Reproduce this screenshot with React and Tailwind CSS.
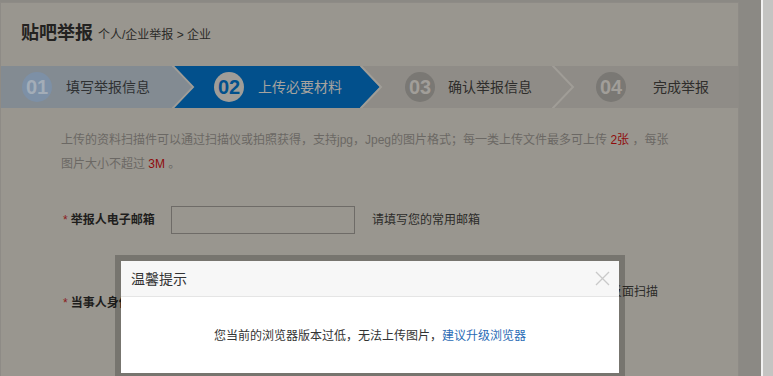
import React from 'react';

const font = "font-['Liberation_Sans','Noto_Sans_CJK_SC',sans-serif]";

const steps = [
  {
    no: '01',
    label: '填写举报信息',
    box: 'w-[172px] bg-[#838b92] pl-[21px] gap-[14px]',
    circle: 'bg-[#7d90a6] text-[#a3adb8]',
    text: 'text-[#2f3133]',
    arrowFill: '#838b92',
  },
  {
    no: '02',
    label: '上传必要材料',
    box: 'w-[188px] bg-[#02508c] pl-[41px] gap-[14px]',
    circle: 'bg-[#a09d98] text-[#02508c]',
    text: 'text-[#a6a39e]',
    arrowFill: '#02508c',
  },
  {
    no: '03',
    label: '确认举报信息',
    box: 'w-[192px] pl-[44px] gap-[13px]',
    circle: 'bg-[#7a7874] text-[#a19e99]',
    text: 'text-[#2e2d2b]',
    arrowFill: null,
  },
  {
    no: '04',
    label: '完成举报',
    box: 'flex-1 pl-[43px] gap-[27px]',
    circle: 'bg-[#7a7874] text-[#a19e99]',
    text: 'text-[#2e2d2b]',
    last: true,
  },
];

const StepArrow = ({ fill }) => (
  <svg
    className="absolute left-full top-0 z-10 -ml-px"
    width="24"
    height="42"
    viewBox="0 0 24 42"
  >
    {fill && <polygon points="0,0 20,21 0,42" fill={fill} />}
    <polyline points="0,-1 21,21 0,43" fill="none" stroke="#a09d97" strokeWidth="2" />
  </svg>
);

const Steps = () => (
  <div className="flex h-[42px] bg-[#8f8c87]">
    {steps.map((s) => (
      <div key={s.no} className={`relative flex items-center ${s.box}`}>
        <span
          className={`flex h-[30px] w-[30px] items-center justify-center rounded-full text-[20px] font-bold leading-none font-['Liberation_Sans',sans-serif] ${s.circle}`}
        >
          {s.no}
        </span>
        <span className={`text-[14px] leading-[20px] ${s.text}`}>{s.label}</span>
        {!s.last && <StepArrow fill={s.arrowFill} />}
      </div>
    ))}
  </div>
);

const Modal = () => (
  <div className="absolute left-[115px] top-[255px] w-[510px] bg-black/[0.22] p-[6px]">
    <div className="bg-white">
      <div className="flex h-[36px] items-center justify-between border-b border-[#e5e5e5] bg-[#f7f7f7] pl-[10px] pr-[9px]">
        <span className="text-[14px] leading-[20px] text-[#333]">温馨提示</span>
        <svg width="15" height="15" viewBox="0 0 15 15">
          <path d="M1 1 L14 14 M14 1 L1 14" stroke="#c9c9c9" strokeWidth="1.3" />
        </svg>
      </div>
      <div className="h-[76px] pt-[32px] text-center text-[12px] leading-[14px] text-[#333]">
        您当前的浏览器版本过低，无法上传图片，
        <span className="text-[#2a6bb5]">建议升级浏览器</span>
      </div>
    </div>
  </div>
);

export default function App() {
  return (
    <div className={`relative flex h-screen w-full overflow-hidden ${font}`}>
      <div className="flex-1 bg-[#8b8984] pt-[2px]">
        <div className="h-[400px] w-[739px] border border-[#8e8b86] bg-[#99968f]">
          {/* header */}
          <div className="flex h-[63px] items-baseline gap-[5px] pl-[20px] pt-[19px]">
            <h1 className="text-[18px] font-bold leading-[22px] text-[#232221]">贴吧举报</h1>
            <span className="text-[12px] leading-[16px] text-[#2b2a28]">个人/企业举报 &gt; 企业</span>
          </div>

          <Steps />

          {/* notice */}
          <p className="mt-[20px] pl-[60px] text-[12px] leading-[24px] text-[#6b6864] whitespace-nowrap">
            上传的资料扫描件可以通过扫描仪或拍照获得，支持jpg，Jpeg的图片格式；每一类上传文件最多可上传{' '}
            <span className="text-[#8f0c0c]">2张</span> ，每张
            <br />
            图片大小不超过 <span className="text-[#8f0c0c]">3M</span> 。
          </p>

          {/* email row */}
          <div className="mt-[30px] flex items-center pl-[62px]">
            <label className="w-[108px] text-[12px] font-bold leading-[20px] text-[#1f1e1d]">
              <span className="mr-[3px] font-normal text-[#8b1c1c]">*</span>举报人电子邮箱
            </label>
            <input
              type="text"
              className="h-[28px] w-[184px] border border-[#6e6b67] bg-transparent outline-none"
            />
            <span className="ml-[17px] text-[12px] leading-[20px] text-[#2c2b29]">请填写您的常用邮箱</span>
          </div>

          {/* id card row */}
          <div className="mt-[48px] flex items-start pl-[62px]">
            <label className="mt-[11px] w-[108px] text-[12px] font-bold leading-[20px] text-[#1f1e1d]">
              <span className="mr-[3px] font-normal text-[#8b1c1c]">*</span>当事人身份证
            </label>
            <div className="h-[80px] w-[301px] border border-[#6e6b67]" />
            <span className="ml-[18px] text-[12px] leading-[20px] text-[#2c2b29]">请上传当事人身份证正反面扫描</span>
          </div>
        </div>
      </div>

      {/* scrollbar strip */}
      <div className="w-[12px] border-l-2 border-[#f2f2f2] bg-[#c4c4c2]" />

      <Modal />
    </div>
  );
}
